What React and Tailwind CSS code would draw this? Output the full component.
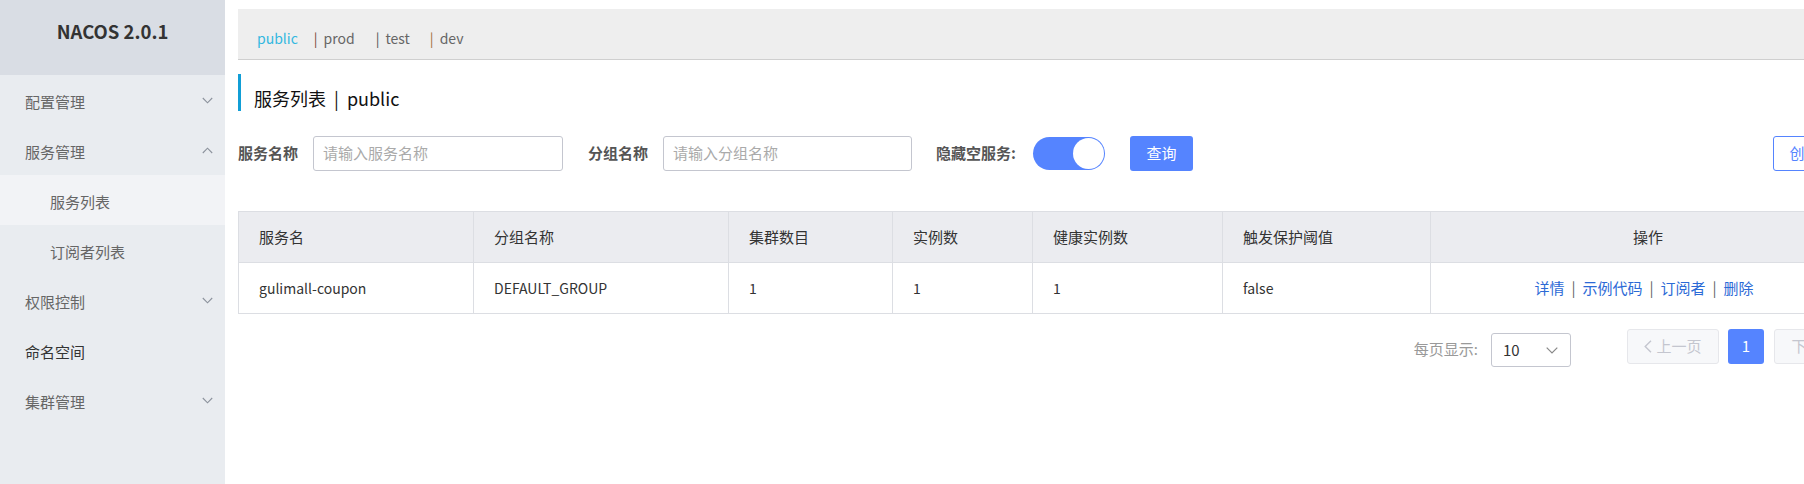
import React from "react";

const font = { fontFamily: '"Noto Sans CJK SC", "Noto Sans", sans-serif' };

function Chevron({ up }) {
  return (
    <svg width="11" height="7" viewBox="0 0 11 7" className="shrink-0">
      <path
        d={up ? "M0.8 6 L5.5 1.2 L10.2 6" : "M0.8 1 L5.5 5.8 L10.2 1"}
        fill="none"
        stroke="#8c929c"
        strokeWidth="1.1"
      />
    </svg>
  );
}

function MenuItem({ label, chevron, up, sub, active, dark }) {
  return (
    <div
      className={`flex h-[50px] items-center justify-between pr-[12px] ${sub ? "pl-[50px]" : "pl-[25px]"} ${active ? "bg-[#f2f3f6]" : ""}`}
    >
      <span className={`pt-[5px] text-[15px] ${dark ? "text-[#333]" : "text-[#666]"}`}>{label}</span>
      {chevron && <Chevron up={up} />}
    </div>
  );
}

const cols = [
  { w: "w-[235px]", h: "服务名", v: "gulimall-coupon" },
  { w: "w-[255px]", h: "分组名称", v: "DEFAULT_GROUP" },
  { w: "w-[164px]", h: "集群数目", v: "1" },
  { w: "w-[140px]", h: "实例数", v: "1" },
  { w: "w-[190px]", h: "健康实例数", v: "1" },
  { w: "w-[208px]", h: "触发保护阈值", v: "false" },
];

export default function App() {
  return (
    <div className="flex h-[484px] w-[1804px] overflow-hidden bg-white" style={font}>
      {/* Sidebar */}
      <div className="flex w-[225px] shrink-0 flex-col bg-[#e9ecf0]">
        <div className="flex h-[75px] items-center justify-center bg-[#d9dde4] pb-[12px]">
          <span className="text-[18.5px] font-bold text-[#333]">NACOS 2.0.1</span>
        </div>
        <MenuItem label="配置管理" chevron />
        <MenuItem label="服务管理" chevron up />
        <MenuItem label="服务列表" sub active />
        <MenuItem label="订阅者列表" sub />
        <MenuItem label="权限控制" chevron />
        <MenuItem label="命名空间" dark />
        <MenuItem label="集群管理" chevron />
      </div>

      {/* Main */}
      <div className="flex-1 pl-[13px] pt-[9px]">
        <div className="w-[1628px]">
          {/* namespace bar */}
          <div className="flex h-[51px] items-center border-b border-[#cfcfcf] bg-[#eeeeee] pl-[19px] pt-[8px] text-[14px]">
            <span className="text-[#33b8e0]">public</span>
            <span className="ml-[16px] text-[#666]"><span className="mr-[6px] text-[#7a4a3a]">|</span>prod</span>
            <span className="ml-[21px] text-[#666]"><span className="mr-[6px] text-[#555]">|</span>test</span>
            <span className="ml-[20px] text-[#666]"><span className="mr-[6px] text-[#a0703a]">|</span>dev</span>
          </div>

          {/* title */}
          <div className="mt-[14px] flex h-[37px] items-end border-l-[3px] border-[#119ed6] pl-[13px]">
            <span className="text-[18px] leading-[26px] text-[#111]">
              服务列表<span className="mx-[8px]">|</span>public
            </span>
          </div>

          {/* search row */}
          <div className="mt-[25px] flex h-[35px] items-center">
            <span className="text-[15px] font-bold text-[#555]">服务名称</span>
            <div className="ml-[15px] flex h-[35px] w-[250px] items-center rounded-[3px] border border-[#c4c6cf] pl-[9px]">
              <span className="text-[15px] text-[#aaa]">请输入服务名称</span>
            </div>
            <span className="ml-[25px] text-[15px] font-bold text-[#555]">分组名称</span>
            <div className="ml-[15px] flex h-[35px] w-[249px] items-center rounded-[3px] border border-[#c4c6cf] pl-[9px]">
              <span className="text-[15px] text-[#aaa]">请输入分组名称</span>
            </div>
            <span className="ml-[24px] text-[15px] font-bold text-[#555]">隐藏空服务:</span>
            <div className="ml-[17px] flex h-[33px] w-[72px] items-center justify-end rounded-full bg-[#5584ff] pr-[1px]">
              <div className="h-[31px] w-[31px] rounded-full bg-white" />
            </div>
            <div className="ml-[25px] flex h-[35px] w-[63px] items-center justify-center rounded-[3px] bg-[#5584ff] text-[15px] text-white">
              查询
            </div>
            <div className="ml-auto flex h-[35px] w-[93px] items-center justify-center rounded-[3px] border border-[#5584ff] text-[15px] text-[#5584ff]">
              创建服务
            </div>
          </div>

          {/* table */}
          <div className="mt-[40px] border border-[#dcdee3]">
            <div className="flex h-[50px] bg-[#ebecf0] text-[15px] text-[#333]">
              {cols.map((c, i) => (
                <div key={i} className={`${c.w} flex items-center border-r border-[#dcdee3] pl-[20px]`}>
                  {c.h}
                </div>
              ))}
              <div className="flex flex-1 items-center justify-center">操作</div>
            </div>
            <div className="flex h-[51px] border-t border-[#dcdee3] text-[14px] text-[#333]">
              {cols.map((c, i) => (
                <div key={i} className={`${c.w} flex items-center border-r border-[#dcdee3] pl-[20px]`}>
                  {c.v}
                </div>
              ))}
              <div className="flex flex-1 items-center justify-center pr-[8px] text-[15px]">
                <span className="text-[#2c6ad6]">详情</span>
                <span className="mx-[7px] text-[#666]">|</span>
                <span className="text-[#2c6ad6]">示例代码</span>
                <span className="mx-[7px] text-[#666]">|</span>
                <span className="text-[#2c6ad6]">订阅者</span>
                <span className="mx-[7px] text-[#666]">|</span>
                <span className="text-[#2c6ad6]">删除</span>
              </div>
            </div>
          </div>

          {/* pagination */}
          <div className="mt-[15px] flex items-start justify-end">
            <span className="mt-[9px] text-[15px] text-[#999]">每页显示:</span>
            <div className="ml-[13px] mt-[4px] flex h-[34px] w-[80px] items-center justify-between rounded-[3px] border border-[#c4c6cf] pl-[11px] pr-[12px]">
              <span className="text-[15px] text-[#333]">10</span>
              <svg width="12" height="7" viewBox="0 0 12 7">
                <path d="M0.7 0.7 L6 6 L11.3 0.7" fill="none" stroke="#888" strokeWidth="1.2" />
              </svg>
            </div>
            <div className="ml-[56px] flex h-[35px] w-[92px] items-center justify-center gap-[4px] rounded-[3px] border border-[#e6e7eb] bg-[#f7f8fa] text-[15px] text-[#c4c6cf]">
              <svg width="8" height="13" viewBox="0 0 8 13">
                <path d="M7 0.7 L1.2 6.5 L7 12.3" fill="none" stroke="#c4c6cf" strokeWidth="1.4" />
              </svg>
              上一页
            </div>
            <div className="ml-[9px] flex h-[35px] w-[36px] items-center justify-center rounded-[3px] bg-[#5584ff] text-[15px] text-white">
              1
            </div>
            <div className="ml-[10px] flex h-[35px] w-[92px] items-center justify-center gap-[4px] rounded-[3px] border border-[#e6e7eb] bg-[#f7f8fa] text-[15px] text-[#c4c6cf]">
              下一页
              <svg width="8" height="13" viewBox="0 0 8 13">
                <path d="M1 0.7 L6.8 6.5 L1 12.3" fill="none" stroke="#c4c6cf" strokeWidth="1.4" />
              </svg>
            </div>
          </div>
        </div>
      </div>
    </div>
  );
}
